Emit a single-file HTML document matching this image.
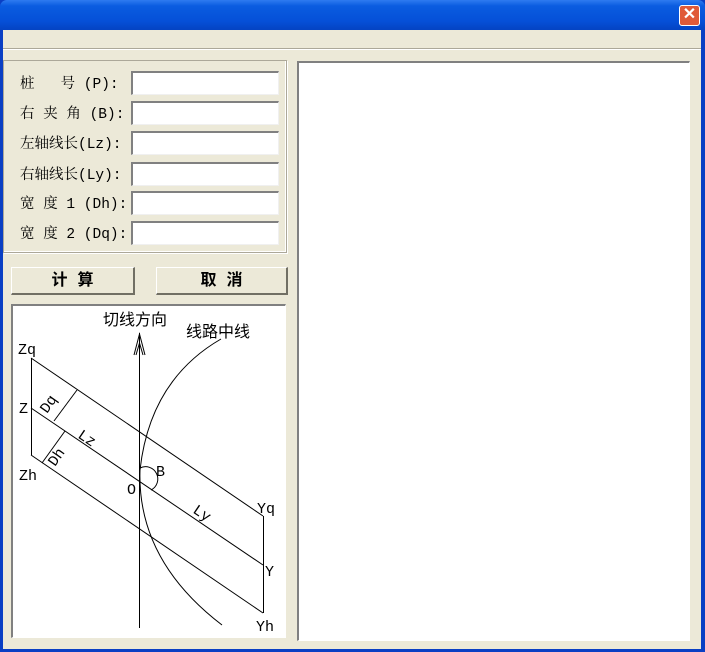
<!DOCTYPE html>
<html><head><meta charset="utf-8"><style>
*{margin:0;padding:0;box-sizing:border-box}
body{width:705px;height:652px;overflow:hidden;background:#0a3fc4;position:relative;font-family:"Liberation Mono","Noto Serif CJK SC",monospace}
.title{position:absolute;left:0;top:0;width:705px;height:30px;background:linear-gradient(#2e7bf0,#0a5ce0 20%,#0550d8 70%,#0443c2);border-radius:7px 7px 0 0}
.close{position:absolute;left:679px;top:5px;width:21px;height:21px;background:#e05a38;border:1px solid #fff;border-radius:3px;color:#fff;font:bold 16px/18px "Liberation Sans",sans-serif;text-align:center}
.client{position:absolute;left:3px;top:30px;width:698px;height:619px;background:#ece9d8}
.sep{position:absolute;left:3px;top:48px;width:698px;height:2px;border-top:1px solid #aca899;border-bottom:1px solid #fff}
.group{position:absolute;left:3px;top:60px;width:284px;height:193px;border:1px solid #aca899;box-shadow:inset -1px -1px #fff,1px 1px #fff}
.lbl{position:absolute;left:20px;font-size:14.5px;color:#000;white-space:pre;letter-spacing:0}
.inp{position:absolute;left:131px;width:148px;height:24px;background:#fff;border-top:2px solid #808080;border-left:2px solid #808080;border-right:1px solid #f0f0f0;border-bottom:1px solid #f0f0f0}
.btn{position:absolute;top:267px;height:28px;background:#ece9d8;border:1px solid #fff;border-right:2px solid #716f64;border-bottom:2px solid #716f64;font:bold 16px/25px "Liberation Sans","Noto Sans CJK SC",sans-serif;text-align:center;letter-spacing:10px;padding-left:10px}
.pic{position:absolute;left:11px;top:304px;width:275px;height:334px;background:#fff;border-top:2px solid #808080;border-left:2px solid #808080;border-right:1px solid #fff;border-bottom:1px solid #fff}
.right{position:absolute;left:297px;top:61px;width:393px;height:580px;background:#fff;border-top:2px solid #808080;border-left:2px solid #808080;border-right:1px solid #fff;border-bottom:1px solid #fff}
</style></head><body>
<div class="title"></div><div class="close">✕</div>
<div class="client"></div>
<div class="sep"></div>
<div class="group"></div>
<div class="lbl" style="top:72px">桩   号 (P):</div>
<div class="lbl" style="top:102px">右 夹 角 (B):</div>
<div class="lbl" style="top:132px">左轴线长(Lz):</div>
<div class="lbl" style="top:163px">右轴线长(Ly):</div>
<div class="lbl" style="top:192px">宽 度 1 (Dh):</div>
<div class="lbl" style="top:222px">宽 度 2 (Dq):</div>
<div class="inp" style="top:71px"></div>
<div class="inp" style="top:101px"></div>
<div class="inp" style="top:131px"></div>
<div class="inp" style="top:162px"></div>
<div class="inp" style="top:191px"></div>
<div class="inp" style="top:221px"></div>
<div class="btn" style="left:11px;width:124px">计算</div>
<div class="btn" style="left:156px;width:132px">取消</div>
<div class="pic"></div>
<div class="right"></div>
<svg style="position:absolute;left:0;top:0" width="705" height="652">
<g stroke="#000" stroke-width="1" fill="none">
<line x1="139.5" y1="333" x2="139.5" y2="628"/>
<path d="M134,355 L139.5,334 L145,355 M136,355 L139.5,343 L143,355"/>
<line x1="31.5" y1="358" x2="31.5" y2="455"/>
<line x1="263.5" y1="516" x2="263.5" y2="613"/>
<line x1="31" y1="358" x2="263" y2="516"/>
<line x1="31" y1="408" x2="263" y2="565"/>
<line x1="31" y1="455" x2="263" y2="613"/>
<line x1="54" y1="421" x2="77" y2="390"/>
<line x1="42" y1="463" x2="65" y2="431"/>
<path d="M221,339 Q150,380 140,470 Q137,560 222,625"/>
<path d="M140,468 A12,12 0 0 1 151,490"/>
</g>
<g font-family="Liberation Mono, Noto Serif CJK SC, monospace" font-size="15" fill="#000">
<text x="103" y="325" font-size="16" font-family="Liberation Sans, Noto Sans CJK SC, sans-serif">切线方向</text>
<text x="186" y="337" font-size="16" font-family="Liberation Sans, Noto Sans CJK SC, sans-serif">线路中线</text>
<text x="18" y="354">Zq</text>
<text x="19" y="413">Z</text>
<text x="19" y="480">Zh</text>
<text x="127" y="494">O</text>
<text x="156" y="476">B</text>
<text x="257" y="513">Yq</text>
<text x="265" y="576">Y</text>
<text x="256" y="631">Yh</text>
<text transform="translate(47,414) rotate(-55)">Dq</text>
<text transform="translate(77,437) rotate(34)">Lz</text>
<text transform="translate(55,467) rotate(-55)">Dh</text>
<text transform="translate(192,512) rotate(34)">Ly</text>
</g>
</svg>
</body></html>
